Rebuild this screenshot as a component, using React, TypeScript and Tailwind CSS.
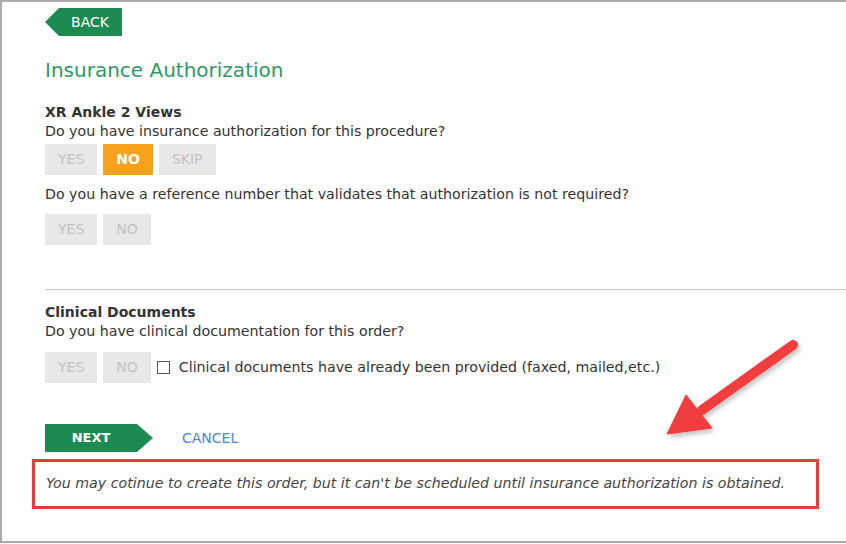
const font = "font-['DejaVu_Sans',Verdana,sans-serif]";

const Choice = ({ label, active }: { label: string; active?: boolean }) => (
  <button
    className={
      'h-[31px] px-[13px] text-[14px] uppercase ' +
      (active ? 'bg-[#f6a21e] text-white font-bold' : 'bg-[#e8e8e8] text-[#c3c3c3]')
    }
  >
    {label}
  </button>
);

export default function App() {
  return (
    <div className={`relative w-[846px] h-[544px] bg-white ${font} text-[#333]`}>
      <div className="h-[543px] border-t-2 border-l-2 border-b-2 border-[#a9a9a9]">
        <div className="pl-[43px] pt-[6px]">
          <button className="h-[28px] w-[77px] bg-[#1d8a52] text-white text-[14px] pl-[13px] [clip-path:polygon(14px_0,100%_0,100%_100%,14px_100%,0_50%)]">
            BACK
          </button>

          <h1 className="mt-[22px] text-[20px] leading-[24px] text-[#2f9866]">Insurance Authorization</h1>

          <h2 className="mt-[21px] text-[14px] leading-[18px] font-bold text-[#333]">XR Ankle 2 Views</h2>
          <p className="mt-[2px] text-[14.2px] leading-[17px]">Do you have insurance authorization for this procedure?</p>
          <div className="mt-[4px] flex gap-[6px]">
            <Choice label="Yes" />
            <Choice label="No" active />
            <Choice label="Skip" />
          </div>
          <p className="mt-[11px] text-[14.2px] leading-[17px]">
            Do you have a reference number that validates that authorization is not required?
          </p>
          <div className="mt-[11px] flex gap-[6px]">
            <Choice label="Yes" />
            <Choice label="No" />
          </div>

          <hr className="mt-[44px] border-t border-[#c8c8c8]" />

          <h2 className="mt-[13px] text-[14px] leading-[18px] font-bold">Clinical Documents</h2>
          <p className="mt-[2px] text-[14.2px] leading-[17px]">Do you have clinical documentation for this order?</p>
          <div className="mt-[12px] flex items-center gap-[6px]">
            <Choice label="Yes" />
            <Choice label="No" />
            <label className="ml-[0px] flex items-center gap-[9px] text-[14.2px]">
              <span className="inline-block w-[13px] h-[13px] border border-[#555] bg-white" />
              Clinical documents have already been provided (faxed, mailed,etc.)
            </label>
          </div>

          <div className="mt-[41px] flex items-center">
            <button className="h-[28px] w-[108px] bg-[#1d8a52] text-white text-[13px] font-bold pr-[16px] [clip-path:polygon(0_0,92px_0,100%_50%,92px_100%,0_100%)]">
              NEXT
            </button>
            <a className="ml-[29px] text-[14px] text-[#4a88cf]">CANCEL</a>
          </div>
        </div>

        <div className="ml-[30px] mt-[7px] w-[787px] h-[50px] border-[3px] border-[#e63c3c] flex items-center pl-[11px]">
          <p className="italic text-[14.2px] text-[#444]">
            You may cotinue to create this order, but it can&apos;t be scheduled until insurance authorization is obtained.
          </p>
        </div>
      </div>

      <svg className="absolute left-[650px] top-[330px] w-[160px] h-[120px]" viewBox="0 0 160 120">
        <defs>
          <filter id="sh" x="-20%" y="-20%" width="140%" height="140%">
            <feDropShadow dx="2" dy="3" stdDeviation="2.5" floodColor="#000" floodOpacity="0.25" />
          </filter>
        </defs>
        <g filter="url(#sh)" fill="#f03c3c" stroke="#f03c3c">
          <line x1="143" y1="15" x2="52" y2="80" strokeWidth="10" strokeLinecap="round" />
          <polygon points="17,104 36,65 62,98" strokeWidth="1" strokeLinejoin="round" />
        </g>
      </svg>
    </div>
  );
}
